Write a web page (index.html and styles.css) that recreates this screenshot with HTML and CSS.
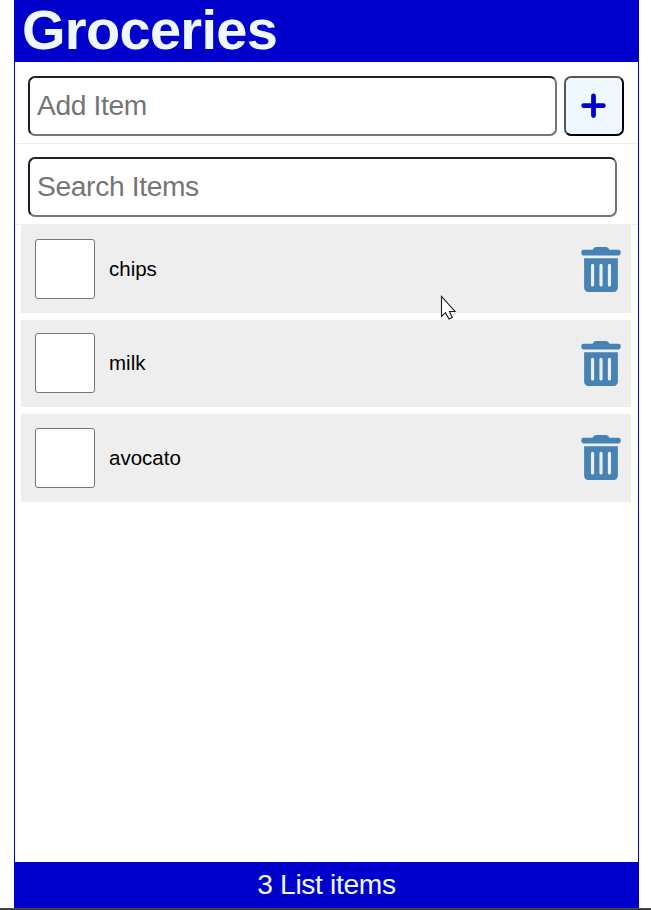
FILE: index.html
```html
<!DOCTYPE html>
<html lang="en">
<head>
<meta charset="utf-8">
<title>Groceries</title>
<link rel="stylesheet" href="styles.css">
</head>
<body>
<svg class="symbols" aria-hidden="true">
  <symbol id="trash" viewBox="0 0 448 512">
    <path d="M32 464a48 48 0 0 0 48 48h288a48 48 0 0 0 48-48V128H32zm270-256a18 18 0 0 1 36 0v224a18 18 0 0 1-36 0zm-96 0a18 18 0 0 1 36 0v224a18 18 0 0 1-36 0zm-96 0a18 18 0 0 1 36 0v224a18 18 0 0 1-36 0zM424 32H320l-9.400-14A34 34 0 0 0 281 0H167a34 34 0 0 0-29.600 18L128 32H24A24 24 0 0 0 0 56v16a24 24 0 0 0 24 24h400a24 24 0 0 0 24-24V56a24 24 0 0 0-24-24z"/>
  </symbol>
</svg>
<div class="app">
  <header class="header"><h1>Groceries</h1></header>
  <form class="add-form">
    <input class="field" type="text" placeholder="Add Item">
    <button class="add-button" type="button" aria-label="Add Item">
      <svg class="plus" viewBox="0 0 26 26"><path d="M12.500 3V22.500M2.700 12.700H22.300"/></svg>
    </button>
  </form>
  <form class="search-form">
    <input class="field" type="text" placeholder="Search Items">
  </form>
  <main class="content">
    <ul class="list">
      <li class="item"><input class="check" type="checkbox"><label>chips</label><svg class="trash"><use href="#trash"/></svg></li>
      <li class="item"><input class="check" type="checkbox"><label>milk</label><svg class="trash"><use href="#trash"/></svg></li>
      <li class="item"><input class="check" type="checkbox"><label>avocato</label><svg class="trash"><use href="#trash"/></svg></li>
    </ul>
  </main>
  <footer class="footer">3 List items</footer>
</div>
<div class="edge"></div>
<svg class="cursor" viewBox="0 0 16 26"><path d="M1.500 1.500V21.500L5.500 17.700L9 24L12.300 22.500L9.500 16.500H15z"/></svg>
</body>
</html>
```

FILE: styles.css
```css
* {
  box-sizing: border-box;
  margin: 0;
  padding: 0;
}

body {
  height: 910px;
  display: flex;
  flex-direction: column;
  background: #fff;
  font-family: "Liberation Sans", Arial, sans-serif;
}

.symbols {
  display: none;
}

.app {
  width: 625px;
  height: 908px;
  margin-left: 14px;
  display: flex;
  flex-direction: column;
  border: solid mediumblue;
  border-width: 0 1px;
}

.header {
  height: 62px;
  padding-left: 7px;
  background: mediumblue;
  color: aliceblue;
}

.header h1 {
  font-size: 56px;
  line-height: 60px;
  letter-spacing: -0.700px;
}

.add-form,
.search-form {
  display: flex;
  gap: 7px;
  border-bottom: 1px solid #eee;
}

.add-form {
  height: 82px;
  padding: 14px 14px 7px 13px;
}

.search-form {
  height: 81px;
  padding: 13px 21px 7px 13px;
}

.field {
  flex: 1;
  min-width: 0;
  height: 60px;
  padding: 0 7px 2px;
  border: 2px solid;
  border-color: #202020 #767676 #767676 #202020;
  border-radius: 7px;
  background: #fff;
  font: 28.200px "Liberation Sans", Arial, sans-serif;
  letter-spacing: -0.350px;
}

.field::placeholder {
  color: #757575;
}

.add-button {
  width: 60px;
  height: 60px;
  display: grid;
  place-items: center;
  border: 2px solid;
  border-color: #555 #000 #000 #555;
  border-radius: 7px;
  background: aliceblue;
}

.plus {
  width: 26px;
  height: 26px;
  fill: none;
  stroke: mediumblue;
  stroke-width: 4.800;
  stroke-linecap: round;
}

.content {
  flex: 1;
  padding: 0.300px 7px 0 6px;
}

.list {
  display: flex;
  flex-direction: column;
  gap: 7px;
  list-style: none;
}

.item {
  height: 87.450px;
  padding: 0 10px 0 14px;
  display: flex;
  align-items: center;
  background: #eee;
}

.check {
  width: 60px;
  height: 60px;
  margin-right: 14px;
  appearance: none;
  border: 1px solid #767676;
  border-radius: 3px;
  background: #fff;
}

.item label {
  flex: 1;
  font-size: 20.500px;
}

.trash {
  width: 40px;
  height: 45px;
  fill: steelblue;
}

.footer {
  height: 46px;
  background: mediumblue;
  color: aliceblue;
  font-size: 28.200px;
  line-height: 44px;
  letter-spacing: -0.350px;
  text-align: center;
}

.edge {
  height: 2px;
  background: #333;
  border-top: 1px solid #4d4d4d;
}

.cursor {
  position: absolute;
  left: 440px;
  top: 295px;
  width: 16px;
  height: 26px;
  fill: #fff;
  stroke: #1a1a2a;
  stroke-width: 1.100;
}
```
